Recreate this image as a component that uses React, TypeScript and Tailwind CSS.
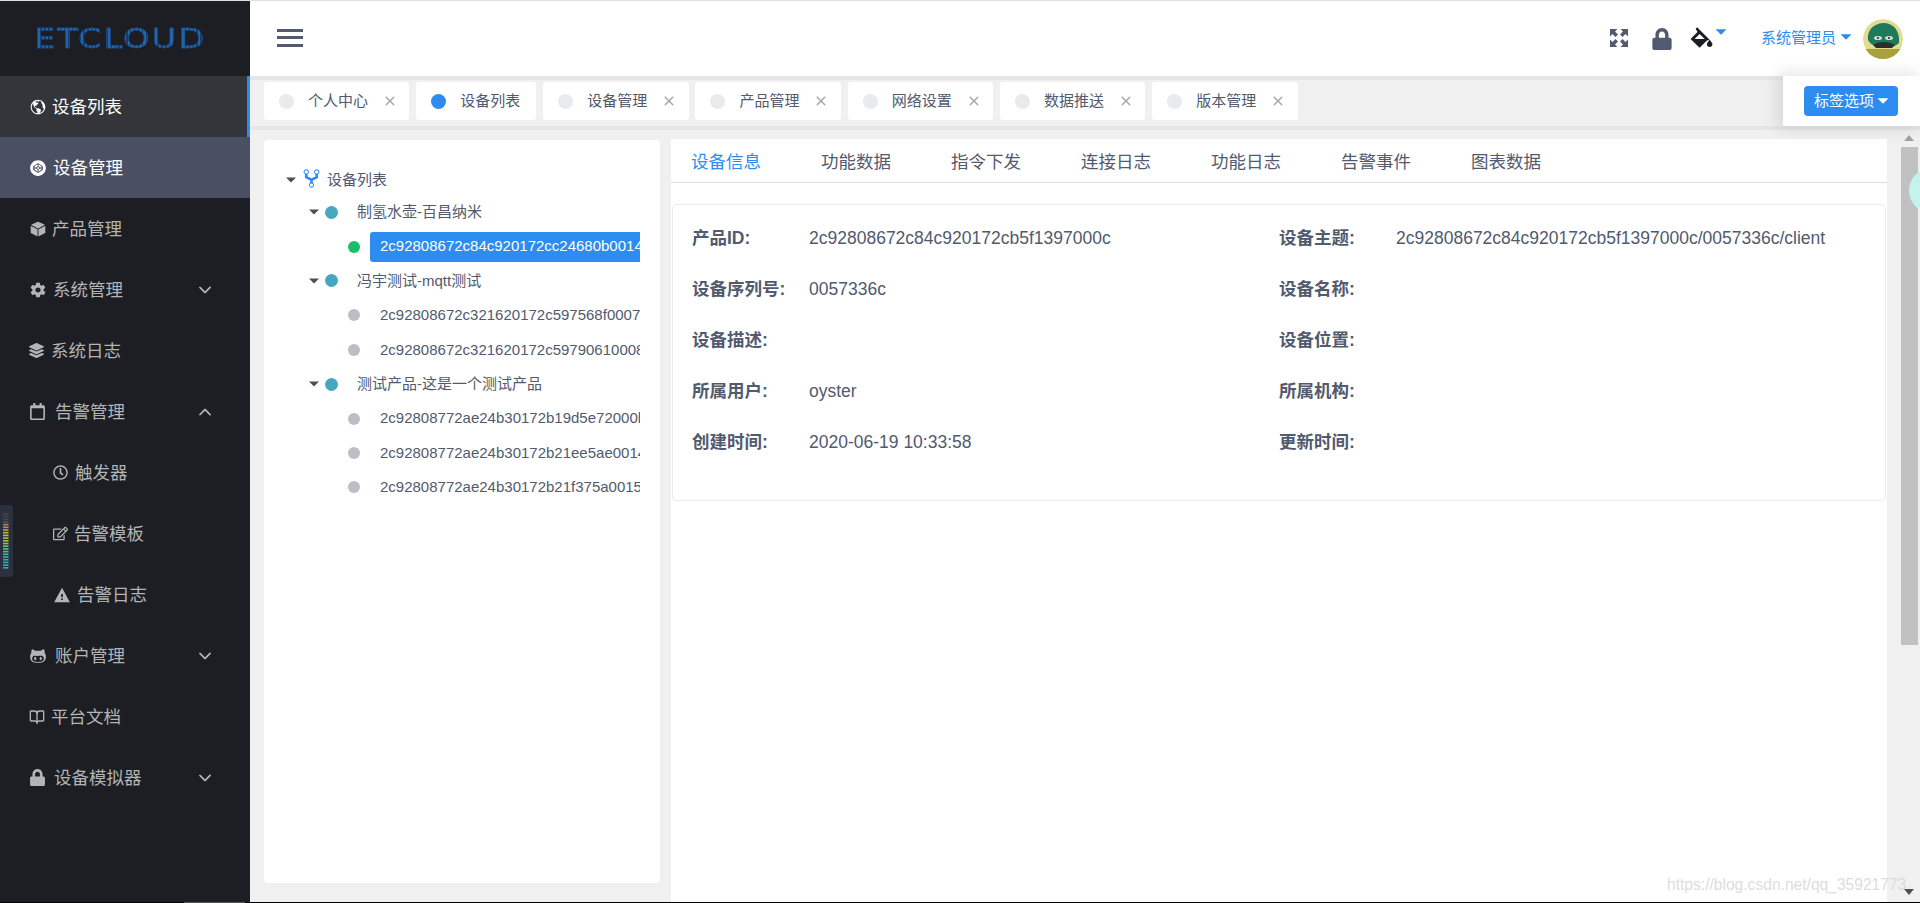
import React from "react";
import { IoMdColorFill, IoMdGitNetwork, IoIosArrowDown, IoIosArrowUp, IoIosClose, IoMdArrowDropdown, IoLogoCodepen, IoIosCube, IoMdSettings, IoMdWarning, IoLogoOctocat, IoMdGlobe } from "react-icons/io";
import { FaLayerGroup, FaRegCalendar, FaRegClock, FaLock, FaRegEdit } from "react-icons/fa";
import { BookOpen } from "lucide-react";

const F = "font-['Liberation_Sans','Noto_Sans_CJK_SC',sans-serif]";

type Item = { t: string; icon: React.ReactNode; gap: number; child?: boolean; arrow?: "down" | "up"; bg?: string; white?: boolean; bar?: boolean };

const menu: Item[] = [
  { t: "设备列表", icon: <IoMdGlobe size={18} />, gap: 5, bg: "bg-[#33353b]", white: true, bar: true },
  { t: "设备管理", icon: <IoLogoCodepen size={18} />, gap: 6, bg: "bg-[#4a5061]", white: true },
  { t: "产品管理", icon: <IoIosCube size={18} />, gap: 5 },
  { t: "系统管理", icon: <IoMdSettings size={18} />, gap: 6, arrow: "down" },
  { t: "系统日志", icon: <FaLayerGroup size={15} />, gap: 7 },
  { t: "告警管理", icon: <FaRegCalendar size={17} />, gap: 9, arrow: "up" },
  { t: "触发器", icon: <FaRegClock size={15} />, gap: 7, child: true },
  { t: "告警模板", icon: <FaRegEdit size={15} />, gap: 6, child: true },
  { t: "告警日志", icon: <IoMdWarning size={18} />, gap: 6, child: true },
  { t: "账户管理", icon: <IoLogoOctocat size={18} />, gap: 8, arrow: "down" },
  { t: "平台文档", icon: <BookOpen size={16} />, gap: 6 },
  { t: "设备模拟器", icon: <FaLock size={17} />, gap: 8, arrow: "down" },
];

const tags = [
  { t: "个人中心", close: true },
  { t: "设备列表", close: false, on: true },
  { t: "设备管理", close: true },
  { t: "产品管理", close: true },
  { t: "网络设置", close: true },
  { t: "数据推送", close: true },
  { t: "版本管理", close: true },
];

const branch = (t: string) => (
  <div className="flex h-[34.4px] items-center pl-[40px] text-[15px] text-[#515a6e]">
    <IoMdArrowDropdown size={20} className="w-5 shrink-0 text-[#4a4f5c]" />
    <span className="ml-[1px] h-[13px] w-[13px] shrink-0 rounded-full bg-[#45a8bf]" />
    <span className="ml-[19px] whitespace-nowrap">{t}</span>
  </div>
);

const leaf = (t: string, on?: boolean) => (
  <div className="flex h-[34.4px] items-center pl-[84px] text-[15px] text-[#515a6e]">
    <span className={`h-3 w-3 shrink-0 rounded-full ${on ? "bg-[#19be6b]" : "bg-[#bbbec4]"}`} />
    <span className={`ml-[10px] flex h-[30px] w-[270px] items-center overflow-hidden whitespace-nowrap rounded-l-[3px] pl-[10px] ${on ? "bg-[#2d8cf0] text-white" : ""}`}>{t}</span>
  </div>
);

const info: [string, string, string, string][] = [
  ["产品ID:", "2c92808672c84c920172cb5f1397000c", "设备主题:", "2c92808672c84c920172cb5f1397000c/0057336c/client"],
  ["设备序列号:", "0057336c", "设备名称:", ""],
  ["设备描述:", "", "设备位置:", ""],
  ["所属用户:", "oyster", "所属机构:", ""],
  ["创建时间:", "2020-06-19 10:33:58", "更新时间:", ""],
];

const ledColors = ["#444", "#444", "#444", "#555", "#c77a3a", "#c98a3c", "#c9a03c", "#c8b03c", "#c2bc40", "#b0c044", "#9cc24c", "#88c458", "#74c464", "#60c274", "#4cc084", "#3cbc94", "#30b8a0", "#2cb4a8", "#2cb0a8", "#2cb0a8", "#2cb0a8"];

const corner = "M0 0H7.5L5 2.5L8 5.5L5.5 8L2.5 5L0 7.5Z";

export default function App() {
  return (
    <div className={`relative flex h-[903px] w-[1920px] flex-col overflow-hidden bg-white ${F}`}>
      <div className="h-px shrink-0 bg-[#dcdee2]" />
      <div className="flex min-h-0 flex-1">
        {/* sidebar */}
        <aside className="w-[250px] shrink-0 bg-[#1d1e23]">
          <div className="flex h-[75px] items-center pl-[34px]">
            <span className="origin-left scale-x-[1.3] bg-[repeating-linear-gradient(90deg,#2364ad_0,#2364ad_2px,#123d70_2px,#123d70_3px)] bg-clip-text font-['DejaVu_Sans',sans-serif] text-[26px] leading-none tracking-[1.5px] text-transparent [-webkit-text-stroke:0.4px_#1b4f8c]">ETCLOUD</span>
          </div>
          {menu.map((m) => (
            <div key={m.t} className={`relative flex h-[61px] items-center text-[17.5px] ${m.child ? "pl-[53px]" : "pl-[29px]"} ${m.bg ?? ""} ${m.white ? "text-white" : "text-[#b3b4b6]"}`}>
              {m.icon}
              <span style={{ marginLeft: m.gap }} className="whitespace-nowrap pt-[2px]">{m.t}</span>
              {m.arrow === "down" && <IoIosArrowDown size={18} className="absolute left-[196px] top-[22px]" />}
              {m.arrow === "up" && <IoIosArrowUp size={18} className="absolute left-[196px] top-[22px]" />}
              {m.bar && <span className="absolute right-0 top-0 h-full w-[3px] bg-[#2d8cf0]" />}
            </div>
          ))}
        </aside>

        {/* main */}
        <div className="flex min-w-0 flex-1 flex-col">
          <header className="flex h-[75px] shrink-0 items-center bg-white pl-[27px]">
            <div className="-mt-[2px] flex w-[26px] flex-col gap-[4.5px]">
              <span className="h-[3px] bg-[#515a6e]" />
              <span className="h-[3px] bg-[#515a6e]" />
              <span className="h-[3px] bg-[#515a6e]" />
            </div>
            <div className="ml-auto flex items-center pr-[17px]">
              <svg width="18" height="18" viewBox="0 0 18 18" fill="#515a6e" className="-mt-[2px]">
                <path d={corner} />
                <path d={corner} transform="matrix(-1 0 0 1 18 0)" />
                <path d={corner} transform="matrix(1 0 0 -1 0 18)" />
                <path d={corner} transform="matrix(-1 0 0 -1 18 18)" />
              </svg>
              <FaLock size={22} className="ml-[23px] text-[#515a6e]" />
              <IoMdColorFill size={25} className="ml-[16px] -mt-[3px] text-[#1d1e23]" />
              <IoMdArrowDropdown size={22} className="-ml-[4px] -mt-[14px] text-[#2d8cf0]" />
              <span className="ml-[29px] whitespace-nowrap text-[15px] text-[#2d8cf0]">系统管理员</span>
              <IoMdArrowDropdown size={22} className="-ml-[1px] -mt-[3px] text-[#2d8cf0]" />
              <svg width="40" height="40" viewBox="0 0 40 40" className="ml-[6px] rounded-full">
                <circle cx="20" cy="20" r="20" fill="#e2dc92" />
                <rect x="0" y="30" width="40" height="10" fill="#a9a23c" />
                <path d="M5 21 C4 11 10 5 20 4 C31 4 37 12 36 24 C30 30 10 31 5 21Z" fill="#1f7a5c" />
                <path d="M10 26 C16 22 25 22 32 26 L29 29 L13 29Z" fill="#27302a" />
                <ellipse cx="15" cy="19" rx="4" ry="2" fill="#d8dcd8" />
                <ellipse cx="26" cy="19" rx="4" ry="2" fill="#d8dcd8" />
                <circle cx="15" cy="19" r="1" fill="#222" />
                <circle cx="26" cy="19" r="1" fill="#222" />
              </svg>
            </div>
          </header>

          {/* tag bar */}
          <div className="relative h-[54px] shrink-0 border-y-4 border-y-[#e6e6e6] bg-[#f0f0f0] pl-[14px] pt-[2px]">
            <div className="flex gap-[6.9px]">
              {tags.map((tag) => (
                <div key={tag.t} className={`flex h-[38px] items-center rounded-[3px] bg-white pl-[15px] text-[15px] text-[#515a6e] ${tag.close ? "w-[145.4px]" : "w-[120px]"}`}>
                  <span className={`h-[15px] w-[15px] shrink-0 rounded-full ${tag.on ? "bg-[#2d8cf0]" : "bg-[#e8eaec]"}`} />
                  <span className="ml-[14px] whitespace-nowrap pt-[1px]">{tag.t}</span>
                  {tag.close && <IoIosClose size={24} className="ml-[10px] text-[#a8a8a8]" />}
                </div>
              ))}
            </div>
            <div className="absolute -top-1 right-0 flex h-[50px] w-[137px] items-center bg-white pl-[21px] shadow-[-3px_0_15px_3px_rgba(0,0,0,0.1)]">
              <div className="flex h-[30px] w-[94px] items-center rounded-[4px] bg-[#2d8cf0] pl-[10px] text-[15px] text-white">
                <span className="whitespace-nowrap">标签选项</span>
                <IoMdArrowDropdown size={22} className="-ml-[2px]" />
              </div>
            </div>
          </div>

          {/* content */}
          <div className="flex min-h-0 flex-1 bg-[#f0f0f0] pl-[14px] pr-[33px]">
            <div className="mb-[19px] mt-[10px] w-[396px] shrink-0 overflow-hidden rounded-[4px] bg-white pt-[24px]">
              <div className="flex h-[31px] items-center pl-[17px] text-[15px] text-[#515a6e]">
                <IoMdArrowDropdown size={20} className="w-5 shrink-0 text-[#4a4f5c]" />
                <IoMdGitNetwork size={21} className="-mt-[3px] shrink-0 text-[#2d8cf0]" />
                <span className="ml-[5px] mt-[2px]">设备列表</span>
              </div>
              {branch("制氢水壶-百昌纳米")}
              {leaf("2c92808672c84c920172cc24680b0014", true)}
              {branch("冯宇测试-mqtt测试")}
              {leaf("2c92808672c321620172c597568f0007")}
              {leaf("2c92808672c321620172c59790610008")}
              {branch("测试产品-这是一个测试产品")}
              {leaf("2c92808772ae24b30172b19d5e72000b")}
              {leaf("2c92808772ae24b30172b21ee5ae0014")}
              {leaf("2c92808772ae24b30172b21f375a0015")}
            </div>

            <div className="ml-[11px] mt-[9px] flex min-w-0 flex-1 flex-col bg-white">
              <div className="flex h-[44px] shrink-0 items-center gap-[60px] border-b border-b-[#dcdee2] pl-[20px] pt-[4px] text-[17.5px] text-[#515a6e]">
                {["设备信息", "功能数据", "指令下发", "连接日志", "功能日志", "告警事件", "图表数据"].map((t, i) => (
                  <span key={t} className={`whitespace-nowrap ${i === 0 ? "text-[#2d8cf0]" : ""}`}>{t}</span>
                ))}
              </div>
              <div className="ml-px mr-px mt-[21px] h-[297px] rounded-[5px] border border-[#e8eaec] pl-[19px] pt-[8px] text-[17.5px] text-[#515a6e]">
                {info.map((r) => (
                  <div key={r[0]} className="flex h-[51px] items-center whitespace-nowrap">
                    <span className="w-[117px] shrink-0 font-bold">{r[0]}</span>
                    <span className="w-[470px] shrink-0">{r[1]}</span>
                    <span className="w-[117px] shrink-0 font-bold">{r[2]}</span>
                    <span>{r[3]}</span>
                  </div>
                ))}
              </div>
            </div>
          </div>
        </div>
      </div>
      <div className="h-px shrink-0 bg-black" />

      {/* browser scrollbar */}
      <div className="absolute right-0 top-[130px] h-[772px] w-[32px] overflow-hidden">
        <div className="absolute left-[16px] top-[5px] h-0 w-0 border-x-[5px] border-b-[6px] border-x-transparent border-b-[#a0a0a0]" />
        <div className="absolute left-[13px] top-[17px] h-[498px] w-[17px] bg-[#c1c1c1]" />
        <div className="absolute left-[21px] top-[38px] h-[45px] w-[45px] rounded-full bg-[#c4f3ee]" />
        <div className="absolute left-[16px] top-[759px] h-0 w-0 border-x-[5px] border-t-[6px] border-x-transparent border-t-[#505050]" />
      </div>

      {/* watermark */}
      <span className="absolute left-[1667px] top-[875px] whitespace-nowrap text-[15.6px] leading-5 text-[#d4d4d4]/80">https://blog.csdn.net/qq_35921773</span>

      {/* floating level meter */}
      <svg width="13" height="72" viewBox="0 0 13 72" className="absolute left-0 top-[505px]">
        <rect x="-4" y="0" width="17" height="72" rx="3" fill="#2b3040" />
        {ledColors.map((c, i) => (
          <rect key={i} x="3" y={8 + i * 2.7} width="5.5" height="1.6" fill={c} />
        ))}
      </svg>

      <div className="absolute bottom-0 left-[184px] h-px w-[61px] bg-[#555]" />
    </div>
  );
}
